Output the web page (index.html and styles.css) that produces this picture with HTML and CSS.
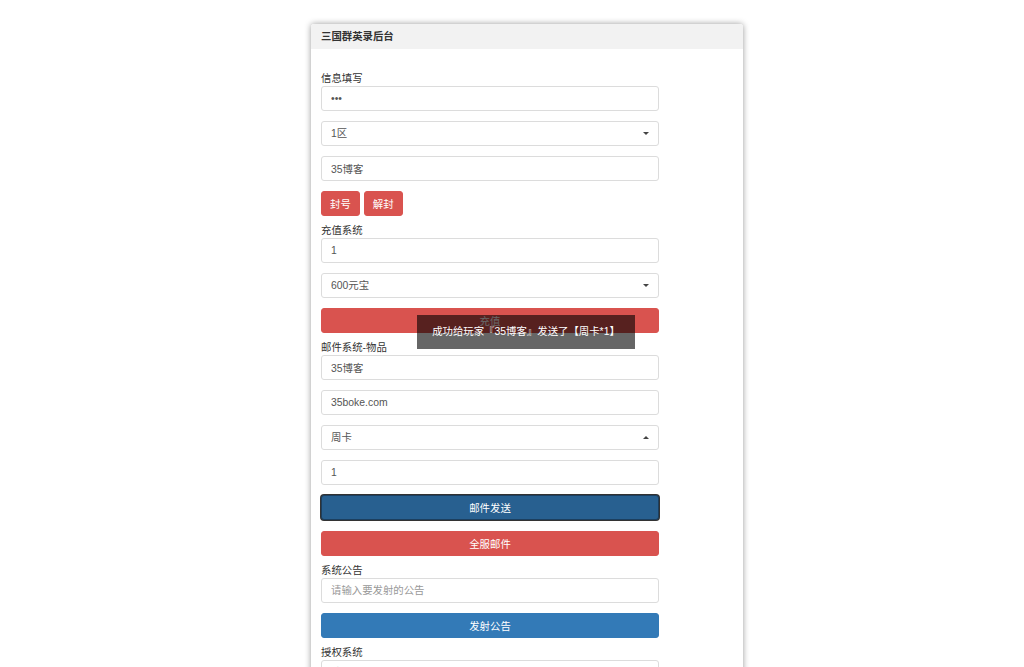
FILE: index.html
```html
<!DOCTYPE html>
<html lang="zh-CN">
<head>
    <meta charset="UTF-8">
    <meta name="viewport" content="width=device-width, initial-scale=1.0">
    <title>三国群英录后台</title>
    <link rel="stylesheet" href="styles.css">
</head>
<body>
    <div class="panel">
        <div class="panel-heading">三国群英录后台</div>
        <div class="panel-body">
            <!-- 信息填写 -->
            <label class="field-label">信息填写</label>
            <input class="form-control" type="password" value="***">
            <div class="select-wrap">
                <select class="form-control">
                    <option>1区</option>
                    <option>2区</option>
                </select>
            </div>
            <input class="form-control" type="text" value="35博客">
            <div class="btn-row">
                <button class="btn btn-danger">封号</button>
                <button class="btn btn-danger">解封</button>
            </div>

            <!-- 充值系统 -->
            <label class="field-label">充值系统</label>
            <input class="form-control" type="text" value="1">
            <div class="select-wrap">
                <select class="form-control">
                    <option>600元宝</option>
                </select>
            </div>
            <button class="btn btn-danger btn-block">充值</button>

            <!-- 邮件系统 -->
            <label class="field-label">邮件系统-物品</label>
            <input class="form-control" type="text" value="35博客">
            <input class="form-control" type="text" value="35boke.com">
            <div class="select-wrap open">
                <select class="form-control">
                    <option>周卡</option>
                </select>
            </div>
            <input class="form-control" type="text" value="1">
            <button class="btn btn-primary btn-block focused">邮件发送</button>
            <button class="btn btn-danger btn-block">全服邮件</button>

            <!-- 系统公告 -->
            <label class="field-label">系统公告</label>
            <input class="form-control" type="text" placeholder="请输入要发射的公告">
            <button class="btn btn-primary btn-block">发射公告</button>

            <!-- 授权系统 -->
            <label class="field-label">授权系统</label>
            <input class="form-control" type="text" placeholder="请输入授权账号">
            <button class="btn btn-primary btn-block">授权</button>
        </div>

        <div class="toast">成功给玩家『35博客』发送了【周卡*1】</div>
    </div>
</body>
</html>
```

FILE: styles.css
```css
body {
    margin: 0;
    background: #fff;
    font-family: "Liberation Sans", "Noto Sans CJK SC", sans-serif;
    font-size: 10.4px;
    color: #333;
}
.panel {
    position: relative;
    width: 432px;
    margin: 24px 0 40px 311px;
    background: #fff;
    border-radius: 3px;
    box-shadow: 0 0 6px rgba(0,0,0,0.4);
}
.panel-heading {
    height: 25px;
    line-height: 25px;
    padding-left: 10px;
    background: #f2f2f2;
    font-weight: bold;
    color: #333;
    border-radius: 3px 3px 0 0;
}
.panel-body {
    width: 338px;
    padding: 23px 10px 12px;
}
.field-label {
    display: block;
    height: 14px;
    line-height: 14px;
    color: #333;
}
.form-control {
    display: block;
    width: 100%;
    height: 25px;
    margin: 0 0 10px;
    padding: 0 9px;
    box-sizing: border-box;
    border: 1px solid #dcdcdc;
    border-radius: 3px;
    background: #fff;
    font-family: inherit;
    font-size: 10.4px;
    color: #555;
    outline: none;
}
.form-control::placeholder {
    color: #999;
}
.select-wrap {
    position: relative;
}
.select-wrap select {
    -webkit-appearance: none;
    appearance: none;
}
.select-wrap::after {
    content: "";
    position: absolute;
    right: 10px;
    top: 11px;
    border-left: 3px solid transparent;
    border-right: 3px solid transparent;
    border-top: 3px solid #444;
}
.select-wrap.open::after {
    border-top: none;
    border-bottom: 3px solid #444;
}
.btn-row {
    display: flex;
    gap: 4px;
    margin-bottom: 8px;
}
.btn {
    height: 25px;
    padding: 0 8px;
    border: 1px solid transparent;
    border-radius: 3px;
    font-family: inherit;
    font-size: 10.4px;
    color: #fff;
    cursor: pointer;
}
.btn-block {
    display: block;
    width: 100%;
    margin-bottom: 11px;
}
.btn-block + .field-label {
    margin-top: -3px;
}
.btn-danger {
    background-color: #d9534f;
    border-color: #d9534f;
}
.btn-primary {
    background-color: #337ab7;
    border-color: #337ab7;
}
.btn-primary.focused {
    background-color: #286090;
    border-color: #1c3f5f;
    box-shadow: 0 0 0 1px #333;
}
.toast {
    position: absolute;
    left: 106px;
    top: 291px;
    width: 218px;
    height: 34px;
    line-height: 34px;
    text-align: center;
    background: rgba(0,0,0,0.6);
    color: #fff;
    font-size: 10.4px;
}
```
